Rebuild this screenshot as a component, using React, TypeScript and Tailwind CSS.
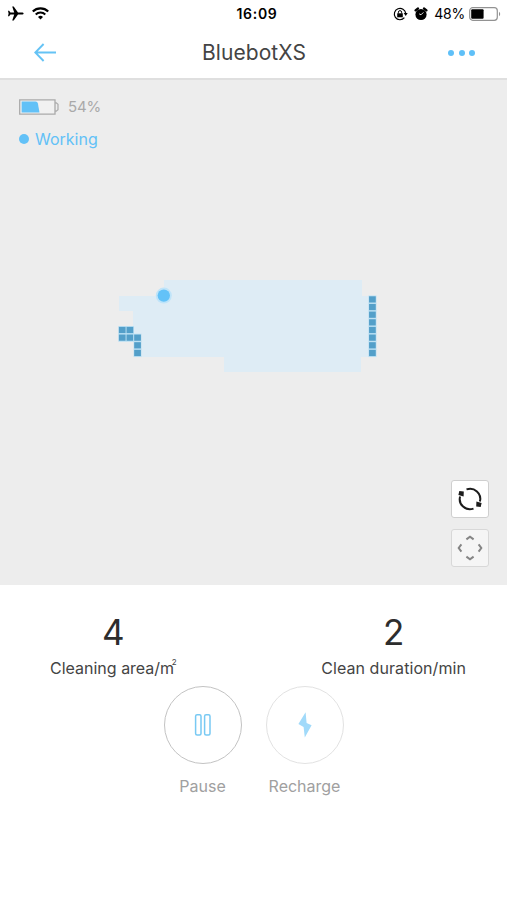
import type { ReactNode } from "react";

const CELL = 7.65;

// wall cells, as [column, row] offsets from the top-left of the explored area
const WALLS = [
  [0, 4],
  [1, 4],
  [0, 5],
  [1, 5],
  [2, 5],
  [2, 6],
  [2, 7],
  ...Array.from({ length: 8 }, (_, i) => [32.7, i]),
];

function StatusBar() {
  return (
    <div className="grid h-[27px] grid-cols-3 items-center pl-2 pr-[6px] text-black">
      <div className="flex items-center gap-2">
        <svg width="16" height="15" viewBox="0 0 16 15" fill="currentColor">
          <path d="M15.6 7.5c0-.7-.8-1-1.7-1H10L5.7.5H4.2l2 6H2.4L1.1 4.7H0l.6 2.8L0 10.3h1.1l1.3-1.8h3.8l-2 6h1.5l4.3-6h3.9c.9 0 1.7-.3 1.7-1z" />
        </svg>
        <svg width="17" height="13" viewBox="0 0 17 13" fill="none" stroke="currentColor">
          <path d="M.8 4.5a11 11 0 0 1 15.4 0" strokeWidth="2.2" />
          <path d="M3.7 7.5a6.9 6.9 0 0 1 9.6 0" strokeWidth="2" />
          <path d="M8.5 12.4L6 9.9a3.6 3.6 0 0 1 5 0z" fill="currentColor" stroke="none" />
        </svg>
      </div>
      <div className="pl-[5px] text-center text-[14px] font-semibold tracking-[0.7px]">16:09</div>
      <div className="flex items-center justify-end">
        <svg width="15" height="14" viewBox="0 0 15 14" fill="none" stroke="currentColor">
          <path d="M11.4 10.7A5.7 5.7 0 1 1 12.7 6.4" strokeWidth="1.2" />
          <path d="M10.7 6.1h4l-2 3z" fill="currentColor" stroke="none" />
          <rect x="4.2" y="6.3" width="5.6" height="4" fill="currentColor" stroke="none" />
          <path d="M5.4 6.5V5.2a1.6 1.6 0 0 1 3.2 0v1.3" strokeWidth="1" />
        </svg>
        <svg className="ml-[6px]" width="14" height="14" viewBox="0 0 14 14">
          <circle cx="7" cy="7.5" r="5.6" fill="currentColor" />
          <path d="M1.5 3.4L4 1.5M12.5 3.4L10 1.5" stroke="currentColor" strokeWidth="2.2" strokeLinecap="round" />
          <path d="M9.4 5.4L7 7.8 5.2 6.9" fill="none" stroke="white" strokeWidth=".9" />
        </svg>
        <span className="ml-[6px] text-[14px] tracking-[-0.2px]">48%</span>
        <svg className="ml-[4px]" width="32" height="14" viewBox="0 0 32 14">
          <rect x=".7" y=".7" width="27.6" height="12.6" rx="3" fill="white" stroke="#929292" strokeWidth="1.2" />
          <rect x="2.2" y="2.2" width="12.4" height="9.6" rx="1" fill="black" />
          <path d="M30 4.8c1.6.8 1.6 3.6 0 4.4z" fill="#929292" />
        </svg>
      </div>
    </div>
  );
}

function NavBar() {
  return (
    <div className="grid h-[53px] grid-cols-[60px_1fr_60px] items-center border-b-2 border-[#dfdfdf]">
      <svg className="ml-[34px]" width="23" height="20" viewBox="0 0 23 20" fill="none" stroke="#65c3f5" strokeWidth="1.9">
        <path d="M22 9.5H1.3M9.6 1L1.3 9.5l8.3 8.5" />
      </svg>
      <h1 className="pl-px text-center text-[21px] tracking-[0.05px] text-[#444]">BluebotXS</h1>
      <div className="ml-px flex gap-[4.5px]">
        {[0, 1, 2].map((i) => (
          <span key={i} className="size-[6px] rounded-full bg-[#5fc0f8]" />
        ))}
      </div>
    </div>
  );
}

function CleaningMap() {
  return (
    <svg className="absolute inset-0" width="507" height="505" viewBox="0 80 507 505">
      <path
        d="M164 280H362V296H369V357H361V372H224V357H142V334H133V311H119V296H164z"
        fill="#deecf5"
      />
      {WALLS.map(([col, row]) => (
        <g key={`${col}-${row}`}>
          <rect x={118.3 + col * CELL} y={295.5 + row * CELL} width="8" height="8" fill="#b9dff3" />
          <rect x={118.9 + col * CELL} y={296.3 + row * CELL} width="6.7" height="6.2" fill="#539fc9" />
        </g>
      ))}
      <circle cx="163.8" cy="295.6" r="8" fill="#bfe4f9" />
      <circle cx="163.8" cy="295.6" r="6.2" fill="#63c2f8" />
    </svg>
  );
}

function Stat({ value, children }: { value: number; children: ReactNode }) {
  return (
    <div className="flex flex-col items-center">
      <span className="text-[35px] leading-[42px] text-[#2d2d2d]">{value}</span>
      <span className="mt-[5px] whitespace-nowrap text-[16px] leading-5 text-[#444]">{children}</span>
    </div>
  );
}

function RoundButton({ label, border, children }: { label: string; border: string; children: ReactNode }) {
  return (
    <button className="flex w-[78px] flex-col items-center">
      <span className={`flex size-[78px] items-center justify-center rounded-full border ${border}`}>{children}</span>
      <span className="mt-3 text-[16px] leading-5 text-[#a0a0a0]">{label}</span>
    </button>
  );
}

export default function App() {
  return (
    <div className="flex h-[900px] w-[507px] flex-col overflow-hidden bg-white font-['Inter',sans-serif]">
      <StatusBar />
      <NavBar />

      <main className="relative h-[505px] bg-[#ededed]">
        <CleaningMap />
        <div className="relative flex h-full flex-col pl-[19px] pr-[18px] pt-[17px]">
          <div className="flex h-5 items-center gap-[9px]">
            <svg width="40" height="16" viewBox="0 0 40 16">
              <path d="M.7.8H36V15.2H.7z" fill="#f1f1f1" stroke="#aaa" strokeWidth="1.3" />
              <path d="M36 3.8h1.2l1.8 1.5v5.4l-1.8 1.5H36" fill="none" stroke="#aaa" strokeWidth="1.2" />
              <path d="M2.6 2.5H16.5q2 0 2.4 2L20.5 13.5H2.6z" fill="#62c1f7" />
            </svg>
            <span className="text-[15px] tracking-[-0.1px] text-[#a9a9a9]">54%</span>
          </div>
          <div className="mt-[12px] flex h-5 items-center gap-[6px]">
            <span className="size-[10px] rounded-full bg-[#62c1f7]" />
            <span className="text-[16px] text-[#62c1f7]">Working</span>
          </div>
          <div className="mb-[18px] ml-auto mt-auto flex flex-col gap-[11px]">
            <button className="flex size-[38px] items-center justify-center rounded-[3px] border border-[#cfcfcf] bg-white">
              <svg width="26" height="26" viewBox="0 0 26 26" fill="none" stroke="#1c1c1c" strokeWidth="2">
                <path d="M9.5 3.4A10.2 10.2 0 0 1 22.9 15.6" />
                <path d="M16.5 22.6A10.2 10.2 0 0 1 3.1 10.4" />
                <path d="M19.4 15.6l5.2 1.4-.9 3.9-4.5-.5zM1.4 9l.9-3.9 4.5.5-.2 4.8z" fill="#1c1c1c" stroke="none" />
              </svg>
            </button>
            <button className="flex size-[38px] items-center justify-center rounded-[3px] border border-[#d8d8d8] bg-[#f5f5f5]">
              <svg width="28" height="28" viewBox="0 0 28 28" fill="none" stroke="#858585" strokeWidth="2">
                <path d="M10.4 5.4L14 2.7l3.6 2.7M10.4 22.6l3.6 2.7 3.6-2.7M5.4 10.4L2.7 14l2.7 3.6M22.6 10.4l2.7 3.6-2.7 3.6" />
              </svg>
            </button>
          </div>
        </div>
      </main>

      <section className="flex justify-between pl-[50px] pr-[41px] pt-[26px]">
        <Stat value={4}>
          Cleaning area/<span className="tracking-[-2.4px]">m</span>
          <sup className="-top-[9px] text-[8px] leading-none">2</sup>
        </Stat>
        <Stat value={2}>
          <span className="tracking-[0.07px]">Clean duration/min</span>
        </Stat>
      </section>

      <section className="mt-2 flex justify-center gap-[24px]">
        <RoundButton label="Pause" border="border-[#c3c3c3]">
          <svg width="18" height="22" viewBox="0 0 18 22" fill="none" stroke="#78c9f3" strokeWidth="1.5">
            <rect x="1.6" y=".8" width="5.4" height="20.2" rx="1.5" />
            <rect x="10.6" y=".8" width="5.4" height="20.2" rx="1.5" />
          </svg>
        </RoundButton>
        <RoundButton label="Recharge" border="border-[#e2e2e2]">
          <svg width="14" height="26" viewBox="0 0 14 26" fill="#a1dafa">
            <path d="M7.6.3L8.6 10.9 13.6 13.3 6.8 25.5 5.6 14.9.4 12.1z" />
          </svg>
        </RoundButton>
      </section>
    </div>
  );
}
